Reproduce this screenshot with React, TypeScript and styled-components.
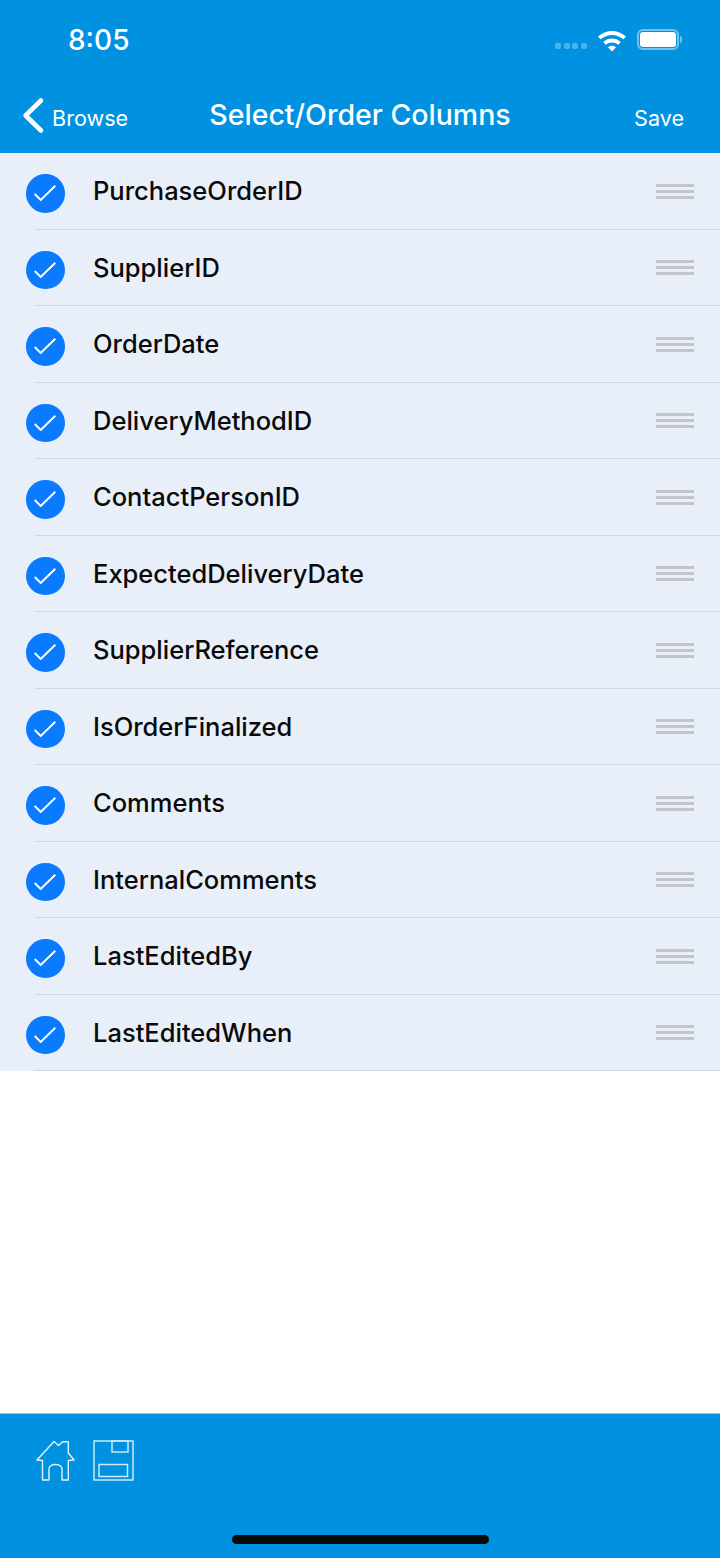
import React from "react";
import styled, { createGlobalStyle } from "styled-components";

const COLUMNS = [
  "PurchaseOrderID",
  "SupplierID",
  "OrderDate",
  "DeliveryMethodID",
  "ContactPersonID",
  "ExpectedDeliveryDate",
  "SupplierReference",
  "IsOrderFinalized",
  "Comments",
  "InternalComments",
  "LastEditedBy",
  "LastEditedWhen",
];

const GlobalStyle = createGlobalStyle`
  html, body {
    margin: 0;
    padding: 0;
    background: #fff;
  }
  body {
    font-family: Inter, "Noto Sans", "Liberation Sans", sans-serif;
  }
`;

const App: React.FC = () => {
  return (
    <Screen>
      <GlobalStyle />
      <Header>
        <StatusBar>
          <Clock>8:05</Clock>
          <StatusIcons>
            <SignalDots>
              <i />
              <i />
              <i />
              <i />
            </SignalDots>
            <svg width="30" height="24" viewBox="0 0 30 24">
              <path d="M1 8.5C9 1 21 1 29 8.5L26.4 11.4C19.8 5.4 10.2 5.4 3.6 11.4Z" fill="#fff" />
              <path d="M6.2 14C11.4 9.4 18.6 9.4 23.8 14L21.2 16.8C17.4 13.6 12.6 13.6 8.8 16.8Z" fill="#fff" />
              <path d="M11 19.2C13.4 17.2 16.6 17.2 19 19.2L15 23.4Z" fill="#fff" />
            </svg>
            <Battery>
              <BatteryFill />
            </Battery>
            <BatteryCap />
          </StatusIcons>
        </StatusBar>
        <NavBar>
          <BackLink>
            <svg width="24" height="38" viewBox="0 0 24 38">
              <path d="M20 4.5L4.6 19.5L20 34.5" fill="none" stroke="#fff" strokeWidth="4.6" strokeLinecap="round" strokeLinejoin="round" />
            </svg>
            <NavText>Browse</NavText>
          </BackLink>
          <Title>Select/Order Columns</Title>
          <NavText>Save</NavText>
        </NavBar>
      </Header>
      <List>
        {COLUMNS.map((name) => (
          <Row key={name}>
            <CheckCircle>
              <svg width="22" height="16" viewBox="0 0 22 16">
                <path d="M0.7 9L6.7 15L21.3 0.8" fill="none" stroke="#fff" strokeWidth="1.9" />
              </svg>
            </CheckCircle>
            <RowBody>
              <Label>{name}</Label>
              <DragHandle>
                <i />
                <i />
                <i />
              </DragHandle>
            </RowBody>
          </Row>
        ))}
      </List>
      <Footer>
        <FooterIcons>
          <svg width="40" height="42" viewBox="0 0 40 42">
            <path
              d="M1 20L18 1.5L22.5 5.5L26.7 1.8H32.3V13L38 20L32.3 20.5V40H26V29C26 23 13 23 13 29V40H6.5V20.5Z"
              fill="none"
              stroke="#e4f3fc"
              strokeWidth="1.4"
              strokeLinejoin="round"
            />
          </svg>
          <svg width="41" height="41" viewBox="0 0 41 41">
            <g fill="none" stroke="#cfe9f9" strokeWidth="1.5">
              <rect x="1" y="1" width="39" height="39" />
              <rect x="19" y="1" width="16" height="11" />
              <rect x="6" y="24.5" width="28.5" height="12" />
            </g>
          </svg>
        </FooterIcons>
        <HomeIndicator />
      </Footer>
    </Screen>
  );
};

export default App;

const Screen = styled.div`
  width: 720px;
  height: 1558px;
  display: flex;
  flex-direction: column;
  overflow: hidden;
`;

const Header = styled.header`
  height: 153px;
  background: #0091e0;
  color: #fff;
  display: flex;
  flex-direction: column;
  flex-shrink: 0;
`;

const StatusBar = styled.div`
  height: 76px;
  box-sizing: border-box;
  padding: 3px 38px 0 68px;
  display: flex;
  align-items: center;
  justify-content: space-between;
`;

const Clock = styled.span`
  font-size: 28px;
  font-weight: 500;
`;

const StatusIcons = styled.div`
  display: flex;
  align-items: center;
`;

const SignalDots = styled.div`
  display: flex;
  gap: 2.6px;
  margin: 13px 10px 0 0;
  i {
    width: 6px;
    height: 6px;
    border-radius: 2px;
    background: rgba(255, 255, 255, 0.3);
  }
`;

const Battery = styled.div`
  width: 42px;
  height: 21px;
  margin-left: 10px;
  padding: 1px;
  border: 2px solid rgba(255, 255, 255, 0.45);
  border-radius: 6px;
  box-sizing: border-box;
`;

const BatteryFill = styled.div`
  width: 100%;
  height: 100%;
  background: #fff;
  border-radius: 3px;
`;

const BatteryCap = styled.div`
  width: 2px;
  height: 7px;
  margin-left: 1px;
  background: rgba(255, 255, 255, 0.45);
  border-radius: 0 2px 2px 0;
`;

const NavBar = styled.nav`
  flex: 1;
  display: flex;
  align-items: center;
  justify-content: space-between;
  padding: 0 36px 0 21px;
  position: relative;
`;

const BackLink = styled.div`
  display: flex;
  align-items: center;
  gap: 7px;
`;

const NavText = styled.span`
  font-size: 21.6px;
  padding-top: 6px;
`;

const Title = styled.h1`
  position: absolute;
  left: 0;
  right: 0;
  margin: 0;
  text-align: center;
  font-size: 28.5px;
  font-weight: 500;
  pointer-events: none;
`;

const List = styled.main`
  flex: 1;
  display: flex;
  flex-direction: column;
`;

const Row = styled.div`
  height: 76.5px;
  background: #e9eff9;
  display: flex;
  align-items: stretch;
  box-sizing: border-box;
  padding-left: 26px;
  position: relative;
`;

const CheckCircle = styled.div`
  position: absolute;
  left: 26px;
  top: 21px;
  width: 38.5px;
  height: 38.5px;
  border-radius: 50%;
  background: #0a7aff;
  display: flex;
  align-items: center;
  justify-content: center;
`;

const RowBody = styled.div`
  flex: 1;
  margin-left: 9px;
  padding: 0 26px 0 58px;
  display: flex;
  align-items: center;
  justify-content: space-between;
  border-bottom: 1px solid #d0d5e2;
`;

const Label = styled.span`
  font-size: 25.5px;
  font-weight: 450;
  color: #0a0a0a;
`;

const DragHandle = styled.div`
  width: 38px;
  display: flex;
  flex-direction: column;
  gap: 3px;
  margin-top: 1px;
  i {
    display: block;
    height: 3px;
    background: #c4c5cb;
  }
`;

const Footer = styled.footer`
  height: 145px;
  background: #0091e0;
  border-top: 1px solid #b5b8bc;
  box-sizing: border-box;
  display: flex;
  flex-direction: column;
  flex-shrink: 0;
  position: relative;
`;

const FooterIcons = styled.div`
  display: flex;
  align-items: flex-start;
  gap: 17px;
  padding: 26px 0 0 36px;
`;

const HomeIndicator = styled.div`
  position: absolute;
  left: 232px;
  bottom: 14px;
  width: 257px;
  height: 9px;
  border-radius: 5px;
  background: #0a0a0a;
`;
